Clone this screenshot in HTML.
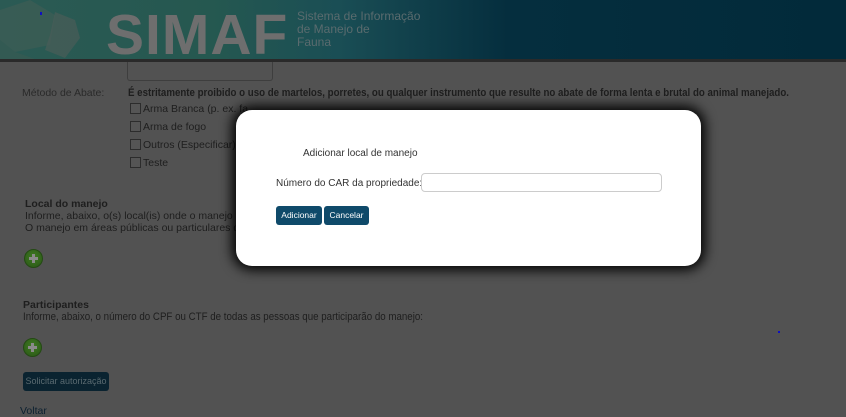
<!DOCTYPE html>
<html><head><meta charset="utf-8"><style>
*{margin:0;padding:0;box-sizing:border-box}
body{width:846px;height:414px;overflow:hidden;background:#525252;font-family:"Liberation Sans",sans-serif;position:relative;color:#1e1e1e}
.hdr{position:absolute;left:0;top:0;width:846px;height:59px;background:linear-gradient(90deg,#2b5a54 0%,#255850 25%,#1a4e55 40%,#052e3e 60%,#022a3a 100%)}
.line{position:absolute;left:0;top:59px;width:846px;height:3px;background:#2a2a2a}
.simaf{position:absolute;left:106px;top:2px;font-size:57px;font-weight:bold;color:#6e6e6e;letter-spacing:1px}
.sub{position:absolute;left:297px;top:10px;font-size:12px;line-height:13px;color:#5a6b6e}
.t{position:absolute;font-size:10.5px;white-space:nowrap}
.cb{position:absolute;width:11px;height:11px;border:1px solid #2c2c2c;background:#555}
.plus{position:absolute;width:19px;height:19px;border-radius:50%;background:radial-gradient(circle at 50% 40%,#3f7a22,#2a5616);border:1px solid #244a14}
.plus:before{content:"";position:absolute;left:4px;top:7px;width:9px;height:3px;background:#8a8a8a}
.plus:after{content:"";position:absolute;left:7px;top:4px;width:3px;height:9px;background:#8a8a8a}
.modal{position:absolute;left:236px;top:110px;width:465px;height:156px;background:#fff;border-radius:16px;box-shadow:0 0 12px 4px #000}
.btn{position:absolute;height:19px;background:#0f4a6a;color:#fff;font-size:8.5px;border-radius:3px;line-height:19px;text-align:center}
svg.s{position:absolute;overflow:visible}
</style></head><body>
<div class="hdr">
<svg width="90" height="59" style="position:absolute;left:0;top:0">
<polygon points="0,10 30,0 55,15 50,45 15,52 0,40" fill="#3f5c56" opacity=".7"/>
<polygon points="55,12 75,20 80,38 65,58 45,50 50,35" fill="#4a5d59" opacity=".7"/>
<polygon points="0,40 15,52 35,59 0,59" fill="#385a53" opacity=".7"/>
</svg>
<div style="position:absolute;left:40px;top:12px;width:2px;height:3px;background:#1010c0"></div>
<div class="simaf">SIMAF</div>
<div class="sub">Sistema de Informação<br>de Manejo de<br>Fauna</div>
</div>
<div class="line"></div>
<div style="position:absolute;left:127px;top:62px;width:146px;height:19px;border:1px solid #3e3e3e;border-top:none;border-radius:0 0 3px 3px"></div>
<div class="t" style="left:22px;top:87px;color:#2a2a2a">Método de Abate:</div>
<svg class="s" style="left:0;top:0" width="846" height="414">
<text x="128" y="96" font-family="Liberation Sans" font-weight="bold" font-size="11" fill="#1e1e1e" textLength="661" lengthAdjust="spacingAndGlyphs">É estritamente proibido o uso de martelos, porretes, ou qualquer instrumento que resulte no abate de forma lenta e brutal do animal manejado.</text>
<text x="23" y="320" font-family="Liberation Sans" font-size="11" fill="#1e1e1e" textLength="400" lengthAdjust="spacingAndGlyphs">Informe, abaixo, o número do CPF ou CTF de todas as pessoas que participarão do manejo:</text>
</svg>
<div class="cb" style="left:130px;top:103px"></div><div class="t" style="left:143px;top:103px">Arma Branca (p. ex. fa</div>
<div class="cb" style="left:130px;top:121px"></div><div class="t" style="left:143px;top:121px">Arma de fogo</div>
<div class="cb" style="left:130px;top:139px"></div><div class="t" style="left:143px;top:139px">Outros (Especificar)</div>
<div class="cb" style="left:130px;top:157px"></div><div class="t" style="left:143px;top:157px">Teste</div>
<div class="t" style="left:25px;top:198px;font-weight:bold">Local do manejo</div>
<div class="t" style="left:25px;top:210px">Informe, abaixo, o(s) local(is) onde o manejo ser</div>
<div class="t" style="left:25px;top:222px">O manejo em áreas públicas ou particulares dev</div>
<div class="plus" style="left:24px;top:249px"></div>
<div class="t" style="left:23px;top:299px;font-weight:bold">Participantes</div>
<div class="plus" style="left:23px;top:338px"></div>
<div style="position:absolute;left:23px;top:372px;width:86px;height:19px;background:#0a2330;border-radius:3px;color:#5a6a70;font-size:9px;line-height:19px;text-align:center">Solicitar autorização</div>
<div class="t" style="left:20px;top:405px;color:#0c2030">Voltar</div>
<div style="position:absolute;left:778px;top:331px;width:2px;height:2px;background:#1010c0"></div>
<div class="modal">
<div class="t" style="left:67px;top:38px;color:#333;font-size:10px">Adicionar local de manejo</div>
<div class="t" style="left:40px;top:68px;color:#333;font-size:10px">Número do CAR da propriedade:</div>
<div style="position:absolute;left:185px;top:63px;width:241px;height:19px;border:1px solid #ccc;border-radius:4px"></div>
<div class="btn" style="left:40px;top:96px;width:46px">Adicionar</div>
<div class="btn" style="left:88px;top:96px;width:45px">Cancelar</div>
</div>
</body></html>
